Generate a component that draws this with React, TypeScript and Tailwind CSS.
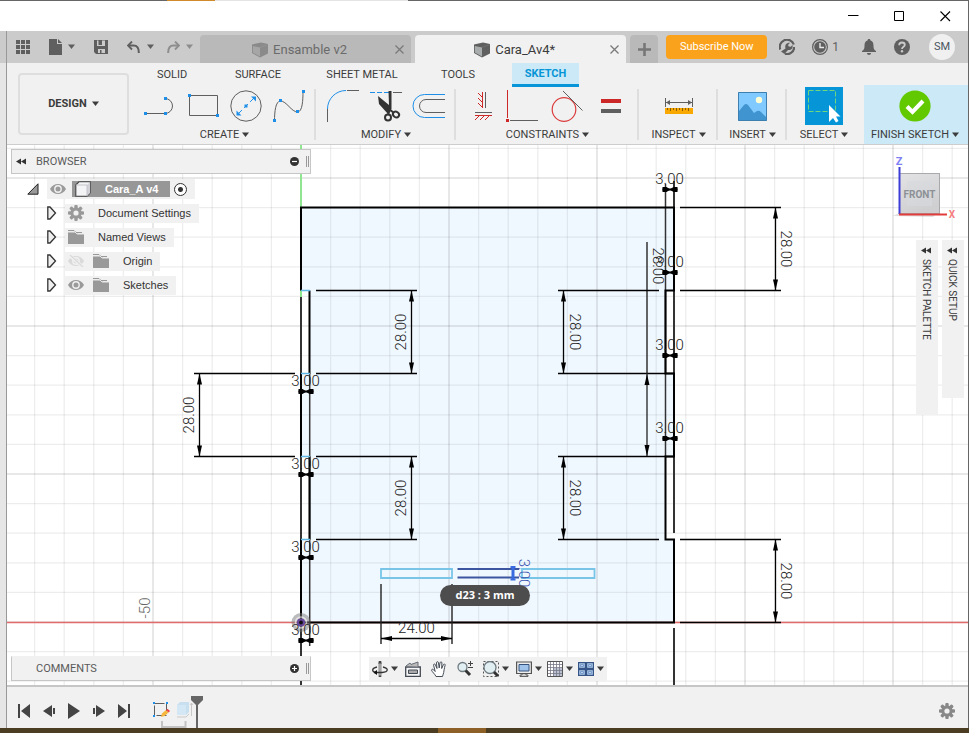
import React from "react";

type Kids = { children?: React.ReactNode };

function Icon({ box, className, children }: Kids & { box: string; className: string }) {
  return (
    <svg viewBox={box} className={`shrink-0 ${className}`} fill="none" aria-hidden="true">
      {children}
    </svg>
  );
}

function Caret({ className = "text-[#3c3c3c]" }: { className?: string }) {
  return (
    <Icon box="0 0 7 5" className={`mb-[2px] h-[5px] w-[7px] ${className}`}>
      <path d="M0 .5h7L3.500 5z" fill="currentColor" />
    </Icon>
  );
}

/* ---------- window chrome ---------- */

function TitleBar() {
  return (
    <header className="flex h-[30px] shrink-0 justify-end bg-white pt-[1px]">
      <button aria-label="Minimize" className="flex w-[46px] items-center justify-center">
        <Icon box="0 0 11 11" className="size-[11px]">
          <path d="M0 4.500h10.500" stroke="#000" />
        </Icon>
      </button>
      <button aria-label="Maximize" className="flex w-[46px] items-center justify-center">
        <Icon box="0 0 11 11" className="size-[11px]">
          <path d="M.5.5h9v9h-9z" stroke="#000" />
        </Icon>
      </button>
      <button aria-label="Close" className="flex w-[46px] items-center justify-center">
        <Icon box="0 0 11 11" className="size-[11px]">
          <path d="M.5.500l9.500 9.500M10 .5L.5 10" stroke="#000" strokeWidth="1.100" />
        </Icon>
      </button>
    </header>
  );
}

function CubeIcon({ active }: { active?: boolean }) {
  const dark = active ? "#5f5f5f" : "#8a8a8a";
  const light = active ? "#a9acad" : "#a6a6a6";
  return (
    <Icon box="0 0 16 16" className="size-4">
      <path d="M0 2.500L9 .5 16 2v9.500L8 15.500 0 11z" fill={dark} />
      <path d="M.8 4L8 5.500v9L.8 10.500z" fill={light} />
      <path d="M8 5.500l8-3" stroke={active ? "#777" : "#999"} strokeWidth=".6" />
    </Icon>
  );
}

function DocTab({ title, active }: { title: string; active?: boolean }) {
  return (
    <div
      className={
        active
          ? "relative flex h-7 min-w-0 flex-1 items-center justify-center rounded-t bg-[#f1f1f1] pr-3 text-[#3c3c3c]"
          : "relative flex h-7 min-w-0 flex-1 items-center justify-center rounded-t bg-[#b9b9b9] pr-3 text-[#6b6b6b]"
      }
    >
      <button className="flex items-center gap-[5px] pt-[1px] text-[13px] leading-4 whitespace-nowrap">
        <CubeIcon active={active} />
        {title}
      </button>
      <button aria-label={`Close ${title}`} className="absolute right-[6px] flex size-3 items-center justify-center">
        <Icon box="0 0 9 9" className="size-[9px]">
          <path d="M.5.5l8 8M8.500.5l-8 8" stroke="#7a7a7a" strokeWidth="1.300" />
        </Icon>
      </button>
    </div>
  );
}

function TabBar() {
  return (
    <div className="flex h-8 shrink-0 bg-[#cbcbcb] pr-[13px] pl-[9px]">
      <div className="flex w-[184px] shrink-0 items-center text-[#5f5f5f]">
        <button aria-label="Data panel">
          <Icon box="0 0 14 14" className="size-[14px]">
            <path
              d="M0 0h4v4H0zM5 0h4v4H5zM10 0h4v4h-4zM0 5h4v4H0zM5 5h4v4H5zM10 5h4v4h-4zM0 10h4v4H0zM5 10h4v4H5zM10 10h4v4h-4z"
              fill="currentColor"
            />
          </Icon>
        </button>
        <button aria-label="File" className="ml-[19px] flex items-center gap-[6px]">
          <Icon box="0 0 13 16" className="h-4 w-[13px]">
            <path d="M0 0h8v5h5v11H0z" fill="currentColor" />
            <path d="M9 0l4 4H9z" fill="currentColor" />
          </Icon>
          <Caret className="text-[#5f5f5f]" />
        </button>
        <button aria-label="Save" className="ml-[19px]">
          <Icon box="0 0 14 14" className="size-[14px]">
            <path d="M0 0h14v14H2l-2-2z" fill="currentColor" />
            <path d="M3 .5h8v5.500H3zM4 9h7v4H4z" fill="#cbcbcb" />
            <path d="M4.500 0h3.500v5H4.500zM6 10h1.500v3H6z" fill="currentColor" />
          </Icon>
        </button>
        <button aria-label="Undo" className="ml-[19px] flex items-center gap-[7px]">
          <Icon box="0 0 13 12" className="h-3 w-[13px]">
            <path d="M1 4.500h5.500Q12 4.500 11.800 12" stroke="currentColor" strokeWidth="2" />
            <path d="M5 .5L1 4.500 5 8.500" stroke="currentColor" strokeWidth="1.800" />
          </Icon>
          <Caret className="text-[#5f5f5f]" />
        </button>
        <button aria-label="Redo" className="ml-[13px] flex items-center gap-[6px]">
          <Icon box="0 0 13 12" className="h-3 w-[13px] text-[#8d8d8d]">
            <path d="M12 4.500H6.500Q1 4.500 1.200 12" stroke="currentColor" strokeWidth="2" />
            <path d="M8 .5l4 4-4 4" stroke="currentColor" strokeWidth="1.800" />
          </Icon>
          <Caret className="text-[#8d8d8d]" />
        </button>
      </div>
      <div className="flex min-w-0 flex-1 items-end gap-1">
        <DocTab title="Ensamble v2" />
        <DocTab title="Cara_Av4*" active />
        <button
          aria-label="New tab"
          className="flex h-7 w-7 shrink-0 items-center justify-center rounded-t bg-[#b9b9b9]"
        >
          <Icon box="0 0 13 13" className="size-[13px]">
            <path d="M6.500 0v13M0 6.500h13" stroke="#777" strokeWidth="2.600" />
          </Icon>
        </button>
      </div>
      <div className="ml-2 flex shrink-0 items-center text-[#5f5f5f]">
        <button className="h-6 w-[101px] rounded bg-[#faa21b] text-[11px] leading-4 text-white">Subscribe Now</button>
        <button aria-label="Extensions" className="ml-3">
          <Icon box="0 0 16 16" className="size-4">
            <path
              d="M5 1.200A7.200 7.200 0 0 1 14.800 5.500M15.200 8A7.200 7.200 0 0 1 6 14.800M1.200 10.500A7.200 7.200 0 0 1 5 1.400"
              stroke="currentColor"
              strokeWidth="2.200"
            />
            <path
              d="M2 12.500l4.500-3C5.500 6 7.500 3.500 11 3.800L9 6l.8 1.600 2 .2L13.500 6c.8 3.500-1.500 5.500-4.500 5l-3.500 4z"
              fill="currentColor"
            />
          </Icon>
        </button>
        <button className="ml-[17px] flex items-center gap-1 text-[12px] leading-4" aria-label="Job status: 1">
          <Icon box="0 0 16 16" className="size-4">
            <circle cx="8" cy="8" r="7.400" stroke="currentColor" strokeWidth="1.200" />
            <circle cx="8" cy="8" r="5.800" fill="currentColor" />
            <path d="M8 4v4.500h4" stroke="#e8e8e8" strokeWidth="1.400" />
          </Icon>
          1
        </button>
        <button aria-label="Notifications" className="ml-[23px]">
          <Icon box="0 0 14 16" className="h-4 w-[14px]">
            <path
              d="M7 0c1 0 1.500.6 1.500 1.500C11 2.300 11.500 4 11.500 7c0 3 .8 4 2.500 5v1H0v-1c1.700-1 2.500-2 2.500-5 0-3 .5-4.700 3-5.500C5.500.6 6 0 7 0zM5 14h4c0 1.200-.8 2-2 2s-2-.8-2-2z"
              fill="currentColor"
            />
          </Icon>
        </button>
        <button aria-label="Help" className="ml-[18px]">
          <Icon box="0 0 16 16" className="size-4">
            <circle cx="8" cy="8" r="8" fill="currentColor" />
            <path d="M5.200 6.300C5.200 4.400 6.400 3.500 8 3.500s2.800.9 2.800 2.400C10.800 7.800 8 7.800 8 10" stroke="#cbcbcb" strokeWidth="1.800" />
            <circle cx="8" cy="12.200" r="1.200" fill="#cbcbcb" />
          </Icon>
        </button>
        <button className="ml-[19px] size-[26px] rounded-full bg-[#f0f0f0] text-[11px] leading-4 text-[#4a5560]">SM</button>
      </div>
    </div>
  );
}

/* ---------- ribbon ---------- */

const GRAY = "#5f5f5f";
const BLUE = "#1e8fe8";
const RED = "#cc2828";

function Tool({ name, box, className, children }: Kids & { name: string; box: string; className: string }) {
  return (
    <button aria-label={name} className="shrink-0">
      <Icon box={box} className={className}>
        {children}
      </Icon>
    </button>
  );
}

function Group({
  label,
  className,
  last,
  gap = "gap-3",
  children,
}: Kids & { label: string; className: string; last?: boolean; gap?: string }) {
  return (
    <section
      className={`relative flex shrink-0 flex-col items-center ${className} ${
        last ? "" : "after:absolute after:top-[2px] after:right-0 after:h-[51px] after:w-[2px] after:bg-[#dedede]"
      }`}
    >
      <div className={`flex h-[38px] shrink-0 items-center justify-center ${gap}`}>{children}</div>
      <button className="mt-[2px] flex items-center gap-[3px] text-[11px] leading-4 whitespace-nowrap text-[#3c3c3c]">
        {label}
        <Caret />
      </button>
    </section>
  );
}

function Dot({ x, y }: { x: number; y: number }) {
  return <rect x={x - 1.5} y={y - 1.5} width="3" height="3" fill={BLUE} />;
}

function Ribbon() {
  return (
    <div className="flex h-[82px] shrink-0 overflow-hidden border-b border-[#cdcdcd] bg-[#f1f1f1]">
      <button className="mt-[10px] ml-[11px] flex h-[62px] w-[111px] shrink-0 items-center justify-center gap-[5px] rounded border-2 border-[#dedede] text-[11px] font-bold text-[#3c3c3c]">
        DESIGN
        <Caret />
      </button>
      <div className="flex min-w-0 flex-1 flex-col">
        <nav className="flex h-6 shrink-0 text-[11px] leading-[22px] text-[#3c3c3c]">
          <button className="w-[86px]">SOLID</button>
          <button className="w-[86px]">SURFACE</button>
          <button className="w-[122px]">SHEET METAL</button>
          <button className="w-[70px]">TOOLS</button>
          <button className="ml-[19px] w-[67px] border-b-3 border-[#0696d7] bg-[#cbe9f6] pt-[1px] leading-[20px] font-bold text-[#0696d7]">
            SKETCH
          </button>
        </nav>
        <div className="flex h-[57px]">
          <Group label="CREATE" className="w-[187px] pl-1" gap="gap-[11px]">
            <Tool name="Line" box="144 96 33 20" className="h-5 w-[33px]">
              <path d="M145 113.500h20a7.500 7.500 0 0 0 0-15" stroke={GRAY} />
              <Dot x={145.5} y={113.5} />
              <Dot x={165.5} y={113.5} />
              <Dot x={165.5} y={98.5} />
            </Tool>
            <Tool name="Rectangle" box="187 94 31 24" className="h-6 w-[31px]">
              <path d="M188.500 95.500h28v20h-28z" stroke={GRAY} />
              <Dot x={188.5} y={95.5} />
              <Dot x={216.5} y={115.5} />
            </Tool>
            <Tool name="Circle" box="230 90 32 32" className="size-8">
              <circle cx="246" cy="106" r="15.200" stroke={GRAY} />
              <path d="M237 115l18-18" stroke={BLUE} strokeDasharray="7 3 5.500 3" />
              <path d="M251 96.500h5v5zM236.500 110.500v5h5z" fill={BLUE} />
              <Dot x={246} y={106} />
            </Tool>
            <Tool name="Spline" box="273 89 33 34" className="h-[34px] w-[33px]">
              <path d="M274.500 121c0-9 1-20 6-20 6 0 11 11 17 11 5 0 5.500-12 5.500-21" stroke={GRAY} />
              <Dot x={274.5} y={120.5} />
              <Dot x={280.5} y={100.5} />
              <Dot x={297.5} y={111.5} />
              <Dot x={303.5} y={91.5} />
            </Tool>
          </Group>
          <Group label="MODIFY" className="w-[140px]" gap="gap-[9px]">
            <Tool name="Fillet" box="326 89 34 34" className="h-[34px] w-[34px]">
              <path d="M327.500 109v13M347 90.500h12" stroke={GRAY} />
              <path d="M327.500 109a18.500 18.500 0 0 1 18.500-18.500" stroke={BLUE} />
            </Tool>
            <Tool name="Trim" box="369 89 34 34" className="h-[34px] w-[34px]">
              <path d="M370 92.500h5m2 0h5m2 0h5" stroke={BLUE} />
              <path d="M393 92.500h9" stroke={GRAY} />
              <path d="M378 96l11 9-.500-14h3v18l-3.500 5-9-10z" fill="#333" />
              <circle cx="388" cy="117.500" r="3" stroke="#333" strokeWidth="2" />
              <ellipse cx="396" cy="114.500" rx="3.200" ry="2.700" transform="rotate(35 396 114.500)" stroke="#333" strokeWidth="2" />
              <path d="M389 109l5 4M390 109l-2 6" stroke="#333" strokeWidth="2" />
            </Tool>
            <Tool name="Offset" box="412 92 34 28" className="h-7 w-[34px]">
              <path d="M445 94.500h-20.500a11.500 11.500 0 0 0 0 23H445" stroke={BLUE} />
              <path d="M445 99.500h-19a6.500 6.500 0 0 0 0 13h19" stroke={GRAY} />
            </Tool>
          </Group>
          <Group label="CONSTRAINTS" className="w-[183px]">
            <Tool name="Horizontal/Vertical" box="473 91 19 30" className="h-[30px] w-[19px]">
              <path d="M481.500 92v16M477 93l4 4M477 98l4 4M477 103l4 4" stroke={RED} />
              <path d="M484.500 92v16M474 112.500h17" stroke={GRAY} />
              <path d="M474 115.500h17M474 120l4-4M479 120l4-4M484 120l4-4" stroke={RED} />
            </Tool>
            <Tool name="Coincident" box="509 89 34 34" className="h-[34px] w-[34px]">
              <path d="M511.500 90v28" stroke={RED} />
              <path d="M514 120.500h28" stroke={GRAY} />
              <path d="M510 119h3v3h-3z" fill={RED} />
            </Tool>
            <Tool name="Tangent" box="552 90 33 33" className="h-[33px] w-[33px]">
              <circle cx="565" cy="109.500" r="11.800" stroke="#dc3c3c" strokeWidth="1.200" />
              <path d="M564 91l19.500 19.500" stroke={GRAY} />
            </Tool>
            <Tool name="Equal" box="597 97 26 18" className="h-[18px] w-[26px]">
              <path d="M602 99h20v4h-20z" fill={RED} />
              <path d="M602 109h20v4h-20z" fill={GRAY} />
            </Tool>
          </Group>
          <Group label="INSPECT" className="w-[79px]">
            <Tool name="Measure" box="663 97 30 18" className="h-[18px] w-[30px]">
              <path d="M664.500 98v9M691.500 98v9M665 102.500h26" stroke={GRAY} />
              <path d="M669 100v5l-4-2.500zM687 100v5l4-2.500z" fill={GRAY} />
              <path d="M664 108h28v6h-28z" fill="#f9a800" />
              <path d="M666.500 108v2m3-2v3m3-3v2m3-2v3m3-3v2m3-2v3m3-3v2m3-2v3" stroke="#8b5d00" />
            </Tool>
          </Group>
          <Group label="INSERT" className="w-[69px]">
            <Tool name="Insert image" box="737 91 29 29" className="size-[29px]">
              <path d="M737 91h29v29h-29z" fill="#80caff" />
              <path d="M738 110l5-6q2-2 4 0l6 8 3-2q2-1 4 1l5 5v3h-27z" fill="#4094cf" />
              <circle cx="758" cy="99" r="3.200" fill="#ffffd6" />
              <path d="M737.500 91.500h28v28h-28z" stroke="#3d7fae" />
            </Tool>
          </Group>
          <Group label="SELECT" className="w-[74px]" last>
            <Tool name="Select" box="805 87 38 38" className="size-[38px]">
              <path d="M805 87h38v38h-38z" fill="#0696d7" />
              <path d="M808.500 90.500h27v21h-27z" stroke="#6fd67c" strokeDasharray="5 2" />
              <path d="M829 105v17l4-4 3 4.500 2.500-1.500-2.500-4.500h4.500z" fill="#fff" />
            </Tool>
          </Group>
        </div>
      </div>
      <button className="mt-[22px] flex w-[104px] shrink-0 flex-col items-center bg-[#cbe9f6] pr-[2px] pt-[5px] text-[11px] leading-4 text-[#3c3c3c]">
        <Icon box="0 0 32 32" className="size-8">
          <circle cx="16" cy="16" r="15.600" fill="#62c900" />
          <path d="M8 16.500l5.500 5.500 10.500-11" stroke="#fff" strokeWidth="4" />
        </Icon>
        <span className="mt-[5px] flex items-center gap-[3px] whitespace-nowrap">
          FINISH SKETCH
          <Caret />
        </span>
      </button>
    </div>
  );
}

/* ---------- canvas ---------- */

function Head({ x, y, turn }: { x: number; y: number; turn: number }) {
  return <path d="M0 0l2.500 11h-5z" fill="#000" transform={`translate(${x} ${y}) rotate(${turn})`} />;
}

function VDim({
  x,
  y1,
  y2,
  from,
  to,
  to2,
  tx,
  flip,
}: {
  x: number;
  y1: number;
  y2: number;
  from: number;
  to: number;
  to2?: number;
  tx: number;
  flip?: boolean;
}) {
  return (
    <g>
      <path d={`M${from} ${y1}H${to}M${from} ${y2}H${to2 ?? to}`} stroke="#000" strokeWidth="1.300" />
      <path d={`M${x} ${y1}V${y2}`} stroke="#000" strokeWidth="1.300" />
      <Head x={x} y={y1} turn={0} />
      <Head x={x} y={y2} turn={180} />
      <Label x={tx} y={(y1 + y2) / 2} turn={flip ? 90 : -90}>
        28.00
      </Label>
    </g>
  );
}

function Label({ x, y, turn = 0, fill = "#222", children }: Kids & { x: number; y: number; turn?: number; fill?: string }) {
  return (
    <text
      transform={`translate(${x} ${y}) rotate(${turn})`}
      textAnchor="middle"
      dy="5.500"
      className="text-[15px] font-light"
      fill={fill}
    >
      {children}
    </text>
  );
}

function Gap({ x, y }: { x: number; y: number }) {
  return (
    <g>
      <Label x={x} y={y - 11.5}>
        3.00
      </Label>
      <path d={`M${x - 7} ${y}h15`} stroke="#000" strokeWidth="2" />
      <path
        d={`M${x - 7} ${y - 2.5}h4l4 2.500-4 2.500h-4zM${x + 8} ${y - 2.5}h-4l-4 2.500 4 2.500h4z`}
        fill="#000"
      />
    </g>
  );
}

const steps = Array.from({ length: 90 }, (_, i) => i - 10);
const outline =
  "M301 207.500H674V290.500H665.500V373.500H674V456.500H665.500V539.500H674V622H301V539.500H309.500V456.500H301V373.500H309.500V290.500H301Z";

function Drawing() {
  return (
    <svg className="absolute inset-0 size-full" role="img" aria-label="Sketch with dimensions">
      <g transform="translate(-7 -145)">
        <path d={outline} fill="#f0f8ff" />
        {steps.map((i) => (
          <path
            key={i}
            d={`M${153 + i * 29.6} 0V2400M0 ${178 + i * 29.6}H2700`}
            stroke="#000"
            strokeOpacity={i % 5 === 0 ? 0.12 : 0.07}
            strokeWidth={i % 5 === 0 ? 1.5 : 1.3}
          />
        ))}
        <path d="M0 622.500H2700" stroke="#e26b6b" strokeWidth="1.300" />
        <path d="M301 140V207M301 290v7" stroke="#90e690" strokeWidth="2" />
        <path d="M309.700 373V646M665.500 184V457" stroke="#333" strokeWidth="1.500" />
        <path d="M301 297V700M674 181V533M674 628V700" stroke="#333" strokeWidth="2" />
        <path d="M647 242V373" stroke="#333" strokeWidth="1.500" />
        <path
          d="M301 290.500V207.500H674V290.500H665.500V373.500H674V456.500H665.500V539.500H674V622.500H301V539.500M309.500 539.500V456.500M301 456.500V373.500M309.500 373.500V290.500"
          stroke="#000"
          strokeWidth="2"
          fill="none"
        />
        <path d="M301 290.500h9M301 373.500h9M301 456.500h9M301 539.500h9" stroke="#62b8e4" strokeWidth="1.300" />

        <VDim x={199.5} y1={373.5} y2={456.5} from={194} to={295} tx={188.5} />
        <VDim x={411.5} y1={290.5} y2={373.5} from={417} to={316} tx={400} />
        <VDim x={411.5} y1={456.5} y2={539.5} from={417} to={316} tx={400} />
        <VDim x={563.5} y1={290.5} y2={373.5} from={558} to={659} to2={674} tx={575} flip />
        <VDim x={563.5} y1={456.5} y2={539.5} from={558} to={674} to2={659} tx={575} flip />
        <VDim x={775.5} y1={207.5} y2={290.5} from={781} to={680} tx={786} flip />
        <VDim x={775.5} y1={539.5} y2={622.5} from={781} to={680} tx={786} flip />
        <path d="M647 373V456" stroke="#222" strokeWidth="1.300" />
        <Head x={647} y={374} turn={0} />
        <Head x={647} y={456} turn={180} />
        <Label x={658} y={266} turn={90}>
          28.00
        </Label>

        <circle cx="301" cy="622.500" r="9.500" fill="#777" fillOpacity=".5" />
        <circle cx="301" cy="622.500" r="5.500" stroke="#fff" strokeOpacity=".6" strokeWidth="1.500" fill="none" />
        <circle cx="301" cy="622.500" r="3" stroke="#67479c" strokeWidth="2.200" fill="#111" />

        <Gap x={305.5} y={391.5} />
        <Gap x={305.5} y={474.5} />
        <Gap x={305.5} y={557.5} />
        <Gap x={305.5} y={640.5} />
        <Gap x={669.5} y={189.5} />
        <Gap x={669.5} y={272.5} />
        <Gap x={669.5} y={355.5} />
        <Gap x={669.5} y={438.5} />

        <path d="M381 584V644M452 584V644" stroke="#222" strokeWidth="1.400" />
        <path d="M381 638.500H452" stroke="#000" strokeWidth="1.300" />
        <Head x={381} y={638.5} turn={-90} />
        <Head x={452} y={638.5} turn={90} />
        <Label x={416.5} y={627.5}>24.00</Label>
        <Label x={144} y={608} turn={-90} fill="#666">
          -50
        </Label>

        <path d="M381 569h71v9h-71zM522 569h72.500v9H522z" stroke="#79c5e8" strokeWidth="1.800" fill="none" />
        <path d="M457.500 569H519M457.500 577.500H519" stroke="#3c55a0" strokeWidth="2" />
        <path d="M513 567V580" stroke="#3a6ae0" strokeWidth="3" />
        <path d="M510.500 567h5M510.500 579.500h5" stroke="#3a6ae0" strokeWidth="2" />
        <Label x={524} y={573} turn={90} fill="#3c55b0">
          3.00
        </Label>
      </g>
    </svg>
  );
}

function ViewCube() {
  return (
    <svg
      viewBox="890 152 70 68"
      className="absolute top-[7px] right-[8px] h-[68px] w-[70px]"
      role="img"
      aria-label="View cube: front"
    >
      <defs>
        <linearGradient id="cube" x1="0" y1="0" x2="0.400" y2="1">
          <stop offset="0" stopColor="#e3e3e5" />
          <stop offset="1" stopColor="#cfcfd2" />
        </linearGradient>
      </defs>
      <path d="M893 216l8-4h38l-6 5z" fill="#000" fillOpacity=".12" />
      <rect x="899.500" y="173.500" width="40" height="40" fill="url(#cube)" stroke="#a9a9ab" />
      <rect x="907" y="181" width="25" height="25" fill="#d6d8dc" fillOpacity=".6" />
      <text x="919.500" y="197.500" textAnchor="middle" className="text-[10px] font-bold" fill="#8d9196">
        FRONT
      </text>
      <path d="M899.500 167v47" stroke="#3c3cd6" strokeWidth="2" />
      <path d="M899 214.500h48" stroke="#e23c3c" strokeWidth="2" />
      <text x="899" y="165" textAnchor="middle" className="text-[11px] font-bold" fill="#8080f5">
        Z
      </text>
      <text x="952" y="218" textAnchor="middle" className="text-[10px] font-bold" fill="#f58080">
        X
      </text>
    </svg>
  );
}

function Rewind() {
  return (
    <Icon box="0 0 10 7" className="h-[7px] w-[10px]">
      <path d="M5 .5v6L0 3.500zM10 .5v6L5 3.500z" fill="#333" />
    </Icon>
  );
}

function PanelHeader({ title, open }: { title: string; open?: boolean }) {
  return (
    <div
      className={`flex h-[25px] w-[300px] items-center border border-[#c6c6c6] bg-[#f1f1f1] text-[11px] leading-4 text-[#5a5a5a] ${
        open ? "" : "border-t-[#f1f1f1]"
      }`}
    >
      <span className="flex w-6 pl-1">{open && <Rewind />}</span>
      <h2 className="flex-1">{title}</h2>
      <button aria-label={`Toggle ${title}`}>
        <Icon box="0 0 9 9" className="size-[9px]">
          <circle cx="4.500" cy="4.500" r="4.500" fill="#333" />
          <path d={open ? "M2 4.500h5" : "M2 4.500h5M4.500 2v5"} stroke="#fff" strokeWidth="1.200" />
        </Icon>
      </button>
      <span className="mr-[1px] ml-[7px] h-[11px] w-[3px] border-x border-[#999]" />
    </div>
  );
}

function Eye({ off }: { off?: boolean }) {
  return (
    <Icon box="0 0 16 12" className={off ? "h-3 w-4 text-[#dadada]" : "h-3 w-4 text-[#9a9a9a]"}>
      <path d="M0 6c3.500-6.600 12.500-6.600 16 0-3.500 6.600-12.500 6.600-16 0z" fill="currentColor" />
      <circle cx="8" cy="6" r="3.200" fill="currentColor" stroke="#f1f1f1" strokeWidth="1.400" />
      {off && <path d="M1 0l14 12" stroke="#f1f1f1" strokeWidth="3" />}
      {off && <path d="M2 0l13 12" stroke="currentColor" strokeWidth="1.300" />}
    </Icon>
  );
}

function Folder() {
  return (
    <Icon box="0 0 16 14" className="h-[14px] w-4">
      <path d="M0 2h8l2 2h6v10H0z" fill="#999" />
      <path d="M0 .5h6l2 2h6" stroke="#999" />
      <path d="M0 2h7l2 2h7" stroke="#e9e9e9" />
    </Icon>
  );
}

function Gear({ className, color, hole }: { className: string; color: string; hole: string }) {
  return (
    <Icon box="-8 -8 16 16" className={className}>
      {[0, 45, 90, 135].map((a) => (
        <rect key={a} x="-1.700" y="-8" width="3.400" height="16" rx="1" fill={color} transform={`rotate(${a})`} />
      ))}
      <circle r="5.600" fill={color} />
      <circle r="2.600" fill={hole} />
    </Icon>
  );
}

function TreeRow({ label, children }: Kids & { label: string }) {
  return (
    <li className="flex h-6 items-center">
      <button aria-label={`Expand ${label}`} className="w-[18px]">
        <Icon box="0 0 10 14" className="h-[14px] w-[10px]">
          <path d="M.8 1h2.200l5.500 6L3 13H.8z" fill="#eee" stroke="#333" strokeWidth="1.300" />
        </Icon>
      </button>
      <div className="flex h-[19px] items-center bg-[#f1f1f1] pr-2 pl-[3px]">
        {children}
        <span className="ml-[14px]">{label}</span>
      </div>
    </li>
  );
}

function BrowserPanel() {
  return (
    <aside className="absolute top-1 left-1">
      <PanelHeader title="BROWSER" open />
      <div className="mt-[3px] ml-4 font-['Liberation_Sans',sans-serif] text-[11px] leading-4 text-[#333]">
        <div className="flex h-6 items-center">
          <button aria-label="Collapse Cara_A v4" className="w-5">
            <Icon box="0 0 12 12" className="h-3 w-3">
              <path d="M11 .8v10.400H.8z" fill="#999" stroke="#222" />
            </Icon>
          </button>
          <div className="flex h-5 items-center bg-[#f1f1f1] pr-2 pl-[3px]">
            <Eye />
            <button className="ml-[6px] flex h-4 items-center gap-[14px] bg-[#979797] pr-3 pl-[3px] font-bold text-white">
              <Icon box="0 0 16 16" className="size-4">
                <path d="M.8 4L4 .8h11.200v11L12 15.200H.8z" fill="#f4f4f6" stroke="#444" strokeWidth="1.100" />
                <path d="M12 4l3-3v11l-3 3z" fill="#d2d2d8" />
                <path d="M1 4h11v11" stroke="#c4c4ca" />
              </Icon>
              Cara_A v4
            </button>
            <label className="ml-1 flex">
              <input
                type="radio"
                name="active-component"
                defaultChecked
                aria-label="Activate Cara_A v4"
                className="size-[13px] appearance-none rounded-full border border-[#333] bg-white bg-[radial-gradient(circle,#333_2px,transparent_3px)]"
              />
            </label>
          </div>
        </div>
        <ul className="ml-5">
          <TreeRow label="Document Settings">
            <Gear className="size-4" color="#999" hole="#f1f1f1" />
          </TreeRow>
          <TreeRow label="Named Views">
            <Folder />
          </TreeRow>
          <TreeRow label="Origin">
            <Eye off />
            <span className="w-[9px]" />
            <Folder />
          </TreeRow>
          <TreeRow label="Sketches">
            <Eye />
            <span className="w-[9px]" />
            <Folder />
          </TreeRow>
        </ul>
      </div>
    </aside>
  );
}

function SideTab({ label, height }: { label: string; height: string }) {
  return (
    <button
      className={`flex w-[22px] flex-col items-center gap-[5px] bg-[#f1f1f1] pt-[7px] pr-[2px] text-[10px] leading-3 text-[#3c3c3c] ${height}`}
    >
      <Rewind />
      <span className="whitespace-nowrap [writing-mode:vertical-rl]">{label}</span>
    </button>
  );
}

function NavTool({ name, menu, className, children }: Kids & { name: string; menu?: boolean; className?: string }) {
  return (
    <button aria-label={name} className={`flex items-center gap-[3px] ${className ?? ""}`}>
      <Icon box="0 0 16 16" className="size-4">
        {children}
      </Icon>
      {menu && <Caret />}
    </button>
  );
}

function NavBar() {
  return (
    <div className="absolute bottom-1 left-[362px] flex h-6 items-center bg-[#f1f1f1] pr-[3px] pl-[3px]">
      <NavTool name="Orbit" menu>
        <path d="M8 0v16" stroke="#444" strokeWidth="2.600" />
        <path d="M8 1.500v13" stroke="#fff" />
        <path d="M6 2.500L8 0l2 2.500z" fill="#444" />
        <path d="M5 6C-1 7.500-.5 11 5 11.500M11 6c6 1.500 5.500 5-1 5.500H2" stroke="#333" strokeWidth="1.300" />
        <path d="M5 9l-3.500 2.500L5 14z" fill="#111" />
      </NavTool>
      <NavTool name="Look at" className="ml-[7px]">
        <path d="M.7 6h14.600v9.300H.7z" fill="#f7f7f7" stroke="#444b55" strokeWidth="1.300" />
        <path d="M3.500 9h9v3.500h-9z" fill="#aaa" stroke="#444b55" />
        <path d="M1 5l4-3 1 1.500L13 1v4.500" stroke="#666d76" fill="#bbb" />
      </NavTool>
      <NavTool name="Pan" className="ml-[10px]">
        <path
          d="M5 15.500C4 13 1 11 .6 9.200c0-1.200 1.300-1.200 2-.4l1.600 1.700L2.600 4.300c-.3-1.500 1.300-1.900 1.800-.5L6 7.500 5.500 1.800c0-1.500 1.900-1.500 2 0L8.200 7l.8-5.200c.3-1.400 2-1.200 1.900.2L10.700 7.500l1.700-3.800c.6-1.300 2-.7 1.700.6-.8 3-1.100 5.200-1.400 7.200-.3 1.700-.9 2.500-1.200 4z"
          fill="#fff"
          stroke="#444b55"
        />
      </NavTool>
      <NavTool name="Zoom" className="ml-[10px]">
        <circle cx="5.500" cy="6" r="4.500" fill="#e1eff2" stroke="#6f7b80" strokeWidth="1.300" />
        <path d="M8.700 9.500L13 14" stroke="#333" strokeWidth="3" />
        <path d="M13.500 0v5M11 2.500h5M11 6.500h5" stroke="#444" />
      </NavTool>
      <NavTool name="Fit" menu className="ml-[10px]">
        <path d="M.5.5h15v15H.5z" stroke="#555" strokeDasharray="2 2" />
        <circle cx="7" cy="6.500" r="6" fill="#e1eff2" stroke="#6f7b80" strokeWidth="1.300" />
        <path d="M11 11l4 4" stroke="#333" strokeWidth="3" />
      </NavTool>
      <NavTool name="Display settings" menu className="ml-[7px]">
        <path d="M.6 1h14.800v11.500H.6z" fill="#eee" stroke="#555" strokeWidth="1.200" />
        <path d="M3 3.500h10v6.500H3z" fill="#9fc3ea" stroke="#34527c" />
        <path d="M6 12.500h4v1.500h2v1.500H4V14h2z" fill="#ccc" stroke="#444" strokeWidth=".8" />
      </NavTool>
      <NavTool name="Grid and snaps" menu className="ml-[5px]">
        <path d="M.5.5h15v15H.5z" fill="#fff" stroke="#555" />
        <path d="M6 7h9v8H6z" fill="#bac2d2" />
        <path
          d="M3.500 1v14M6.500 1v14M9.500 1v14M12.500 1v14M1 3.500h14M1 6.500h14M1 9.500h14M1 12.500h14"
          stroke="#778"
          strokeWidth=".8"
        />
      </NavTool>
      <NavTool name="Viewports" menu className="ml-[5px]">
        <path
          d="M.6 1.600h6.800v5.800H.6zM8.600 1.600h6.800v5.800H8.600zM.6 8.600h6.800v5.800H.6zM8.600 8.600h6.800v5.800H8.600z"
          fill="#b4cdeb"
          stroke="#355488"
          strokeWidth="1.200"
        />
        <path
          d="M2.500 3.500h3v2h-3zM10.500 3.500h3v2h-3zM2.500 10.500h3v2h-3zM10.500 10.500h3v2h-3z"
          stroke="#6b8fc4"
          strokeWidth=".8"
        />
      </NavTool>
    </div>
  );
}

function Canvas() {
  return (
    <main className="relative min-h-0 flex-1 overflow-hidden bg-white">
      <Drawing />
      <div className="absolute top-[440px] left-[433px] flex h-[21px] w-[90px] items-center justify-center rounded-full bg-[#4d4d4d] font-['Open_Sans',sans-serif] text-[11px] font-bold whitespace-nowrap text-white">
        d23 : 3 mm
      </div>
      <BrowserPanel />
      <ViewCube />
      <div className="absolute top-[95px] right-1 flex items-start gap-1">
        <SideTab label="SKETCH PALETTE" height="h-[175px]" />
        <SideTab label="QUICK SETUP" height="h-[158px]" />
      </div>
      <aside className="absolute bottom-1 left-1">
        <PanelHeader title="COMMENTS" />
      </aside>
      <NavBar />
    </main>
  );
}

/* ---------- timeline ---------- */

const transport = [
  { name: "Go to start", d: "M0 1h2v14H0zM12 1v14L3 8z" },
  { name: "Step back", d: "M9 2v12L0 8zM10 5h2v6h-2z" },
  { name: "Play", d: "M0 0v16l12-8z" },
  { name: "Step forward", d: "M0 5h2v6H0zM3 2v12l9-6z" },
  { name: "Go to end", d: "M0 1v14l9-7zM10 1h2v14h-2z" },
];

function Timeline() {
  return (
    <footer className="flex h-[43px] shrink-0 border-t-2 border-[#c6c6c6] bg-[#f1f1f1] pr-[13px] pl-[11px]">
      <div className="flex items-center gap-[13px] pt-[6px]">
        {transport.map((t) => (
          <button key={t.name} aria-label={t.name}>
            <Icon box="0 0 12 16" className="h-4 w-3">
              <path d={t.d} fill="#444" />
            </Icon>
          </button>
        ))}
      </div>
      <Icon box="152 695 54 33" className="mt-2 ml-[22px] h-[33px] w-[54px]">
        <path d="M154.500 703.500h12v12h-12z" stroke={GRAY} strokeDasharray="10 2" />
        <path d="M153 702h2v2h-2zM166 702h2v2h-2zM153 715h2v2h-2z" fill={BLUE} />
        <path d="M161 717l1-3.500 4-3.500 2.500 2.500-4 3.500z" fill="#f6b73c" />
        <path d="M166 710l1.500-1.300 2.500 2.300-1.500 1.500z" fill="#ee4444" />
        <path d="M177 705l3-3h9v10l-3 3h-9z" fill="#c8dff0" />
        <path d="M177 705h9v10h-9z" fill="#d3e7f5" />
        <path d="M177 717h9l3-3M191.500 716v-13m-1.500 2l1.500-2 1.500 2" stroke="#c9c9c9" />
        <path d="M162 721v6h23.500v-6" stroke="#c3c3c3" strokeWidth="2" />
        <path d="M191 696h12v4l-5 5h-2l-5-5z" fill="#666" />
        <path d="M197 700v28" stroke="#666" strokeWidth="2" />
      </Icon>
      <button aria-label="Timeline settings" className="mt-[6px] ml-auto">
        <Gear className="size-4" color="#888" hole="#f1f1f1" />
      </button>
    </footer>
  );
}

export default function App() {
  return (
    <div className="flex h-screen min-h-[500px] flex-col overflow-hidden bg-white font-['Roboto','Liberation_Sans',sans-serif]">
      <div className="flex h-px shrink-0 bg-[#666]">
        <span className="w-[167px]" />
        <span className="w-12 bg-[#d08a2a]" />
        <span className="w-[193px] bg-[#e4e4e4]" />
      </div>
      <div className="flex min-h-0 flex-1 flex-col border-r border-[#666]">
        <TitleBar />
        <div className="flex min-h-0 flex-1">
          <div className="flex w-[7px] shrink-0 flex-col border-r border-[#999] bg-[#e6e6e6]">
            <span className="h-8 bg-[#cbcbcb]" />
          </div>
          <div className="flex min-w-0 flex-1 flex-col">
            <TabBar />
            <Ribbon />
            <Canvas />
            <Timeline />
          </div>
        </div>
      </div>
      <div className="flex h-[5px] shrink-0 bg-[#4a3d22]">
        <span className="ml-[438px] w-12 bg-[#8c6026]" />
      </div>
    </div>
  );
}
